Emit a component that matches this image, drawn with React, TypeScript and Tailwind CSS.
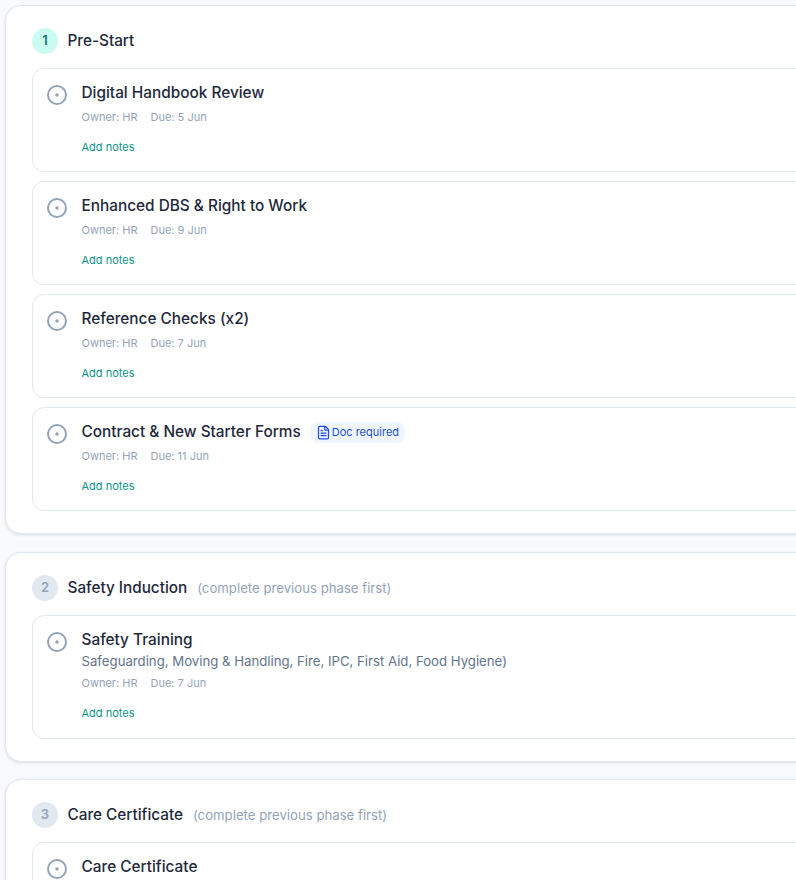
import {FileText} from 'lucide-react'

type Task = {title: string; detail?: string; due: string; doc?: boolean}

const phases: {num: number; name: string; locked?: boolean; tasks: Task[]}[] = [
  {
    num: 1,
    name: 'Pre-Start',
    tasks: [
      {title: 'Digital Handbook Review', due: '5 Jun'},
      {title: 'Enhanced DBS & Right to Work', due: '9 Jun'},
      {title: 'Reference Checks (x2)', due: '7 Jun'},
      {title: 'Contract & New Starter Forms', due: '11 Jun', doc: true},
    ],
  },
  {
    num: 2,
    name: 'Safety Induction',
    locked: true,
    tasks: [
      {
        title: 'Safety Training',
        detail: 'Safeguarding, Moving & Handling, Fire, IPC, First Aid, Food Hygiene)',
        due: '7 Jun',
      },
    ],
  },
  {
    num: 3,
    name: 'Care Certificate',
    locked: true,
    tasks: [{title: 'Care Certificate', due: '30 Jun'}],
  },
]

function StatusIcon() {
  return (
    <svg width="20" height="20" viewBox="0 0 20 20" fill="none" className="shrink-0 mt-[8px]">
      <circle cx="10" cy="10" r="9" stroke="#94a3b8" strokeWidth="2" />
      <circle cx="10" cy="10" r="1.75" fill="#94a3b8" />
    </svg>
  )
}

function TaskCard({task}: {task: Task}) {
  return (
    <div
      className={
        task.detail
          ? 'flex gap-[14.5px] rounded-xl border border-[#e2e8f0] bg-white pl-[14px] pr-4 pt-[8px] pb-[17px]'
          : 'flex gap-[14.5px] rounded-xl border border-[#e2e8f0] bg-white pl-[14px] pr-4 pt-[8px] pb-[16px]'
      }
    >
      <StatusIcon />
      <div className="min-w-0 flex-1">
        <div className="flex items-center gap-[9px]">
          <span className="text-[15.36px] leading-[32px] font-[450] text-[#1e293b]">{task.title}</span>
          {task.doc && (
            <span className="flex h-[21px] items-center gap-[1px] rounded-lg bg-[#eff6ff] px-[6px] text-[11px] text-[#1d4ed8]">
              <FileText size={15} strokeWidth={2} />
              Doc required
            </span>
          )}
        </div>
        {task.detail && (
          <div className="-mt-[5px] mb-[4px] text-[13.2px] leading-[20px] text-[#64748b]">{task.detail}</div>
        )}
        <div className="flex gap-[13px] text-[11px] leading-[16px] text-[#94a3b8]">
          <span>Owner: HR</span>
          <span>Due: {task.due}</span>
        </div>
        <div className="mt-[14px] text-[11px] leading-[16px] text-[#0d9488]">Add notes</div>
      </div>
    </div>
  )
}

function Phase({phase}: {phase: (typeof phases)[number]}) {
  return (
    <section className="rounded-2xl border border-[#e2e8f0] bg-white px-[26px] pt-[22px] pb-[22px] shadow-[0_1px_3px_rgba(15,23,42,0.12)] first:mb-[1px]">
      <div className="flex h-[26px] items-center">
        <div
          className={
            phase.locked
              ? 'flex h-[26px] w-[26px] items-center justify-center rounded-full bg-[#e2e8f0] text-[13px] font-semibold text-[#94a3b8]'
              : 'flex h-[26px] w-[26px] items-center justify-center rounded-full bg-[#ccfbf1] text-[13px] font-semibold text-[#0f766e]'
          }
        >
          {phase.num}
        </div>
        <h2 className="ml-[9.5px] mt-[1px] text-[15.3px] font-[550] text-[#1e293b]">{phase.name}</h2>
        {phase.locked && (
          <span className="ml-[10px] mt-[1px] text-[13.2px] text-[#94a3b8]">(complete previous phase first)</span>
        )}
      </div>
      <div className="mt-[14px] flex flex-col gap-[9px]">
        {phase.tasks.map((task) => (
          <TaskCard key={task.title} task={task} />
        ))}
      </div>
    </section>
  )
}

export default function App() {
  return (
    <div className="h-[880px] w-[796px] overflow-hidden bg-[#f8fafc] font-['Inter',sans-serif]">
      <div className="flex w-[1100px] flex-col gap-[17px] pl-[5px] pt-[5px]">
        {phases.map((phase) => (
          <Phase key={phase.num} phase={phase} />
        ))}
      </div>
    </div>
  )
}
